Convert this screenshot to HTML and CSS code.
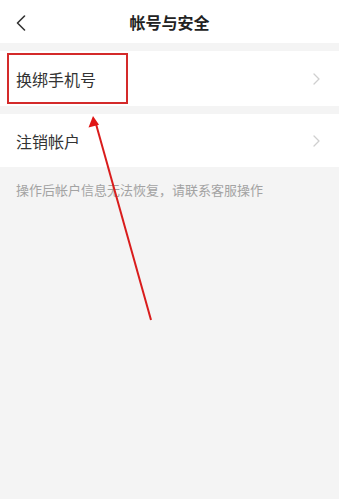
FILE: index.html
```html
<!DOCTYPE html>
<html lang="zh">
<head>
<meta charset="utf-8">
<link rel="stylesheet" href="styles.css">
</head>
<body>
<div class="page">
  <header class="topbar">
    <svg class="back" width="10" height="16" viewBox="0 0 10 16"><path d="M8.5 1 L1.5 8 L8.5 15" fill="none" stroke="#333" stroke-width="1.6" stroke-linecap="round" stroke-linejoin="round"/></svg>
    <h1 class="title">帐号与安全</h1>
  </header>
  <div class="row row-first">
    <span class="label">换绑手机号</span>
    <svg class="chev" width="7" height="12" viewBox="0 0 7 12"><path d="M1 1 L6 6 L1 11" fill="none" stroke="#cfcfcf" stroke-width="1.3" stroke-linecap="round" stroke-linejoin="round"/></svg>
  </div>
  <div class="row row-second">
    <span class="label">注销帐户</span>
    <svg class="chev" width="7" height="12" viewBox="0 0 7 12"><path d="M1 1 L6 6 L1 11" fill="none" stroke="#cfcfcf" stroke-width="1.3" stroke-linecap="round" stroke-linejoin="round"/></svg>
  </div>
  <p class="note">操作后帐户信息无法恢复，请联系客服操作</p>

  <div class="highlight"></div>
  <svg class="arrow" width="339" height="499" viewBox="0 0 339 499">
    <line x1="151" y1="320" x2="96" y2="124" stroke="#d91c1c" stroke-width="2"/>
    <polygon points="93,116 88.5,127.5 99,124.8" fill="#e01515"/>
  </svg>
</div>
</body>
</html>
```

FILE: styles.css
```css
html, body {
  margin: 0;
  padding: 0;
}
body {
  background: #f4f4f4;
  font-family: "Noto Sans CJK SC", "Noto Sans", sans-serif;
  width: 339px;
  height: 499px;
  overflow: hidden;
}
.page {
  position: relative;
  width: 339px;
  height: 499px;
}
.topbar {
  height: 43px;
  background: #fff;
  display: flex;
  align-items: center;
  justify-content: center;
  position: relative;
}
.back {
  position: absolute;
  left: 16px;
  top: 15px;
}
.title {
  margin: 0;
  font-size: 16px;
  font-weight: 700;
  color: #222;
  line-height: 1;
}
.row {
  background: #fff;
  display: flex;
  align-items: center;
  justify-content: space-between;
  padding: 0 19px 0 16px;
}
.row-first {
  margin-top: 8px;
  height: 55px;
}
.row-second {
  margin-top: 8px;
  height: 53px;
}
.label {
  font-size: 16px;
  color: #333;
  line-height: 1;
}
.note {
  margin: 0;
  padding: 14px 16px 0;
  font-size: 13px;
  color: #a3a3a3;
  line-height: 1.4;
}
.highlight {
  position: absolute;
  left: 7px;
  top: 53px;
  width: 117px;
  height: 47px;
  border: 2px solid #d42a2a;
}
.arrow {
  position: absolute;
  left: 0;
  top: 0;
  pointer-events: none;
}
```
